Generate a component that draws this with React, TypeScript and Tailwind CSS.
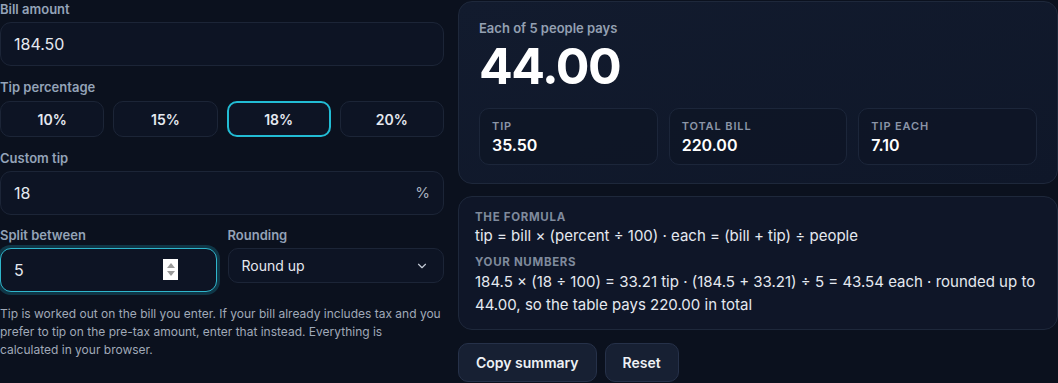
import React, { useState } from 'react';
import { ChevronDown } from 'lucide-react';

const PRESETS = [10, 15, 18, 20];

function Label({ children }: { children: React.ReactNode }) {
  return <p className="text-[13px] font-semibold text-[#94a3b8] leading-[18px] mb-[4px]">{children}</p>;
}

function Stat({ label, value }: { label: string; value: string }) {
  return (
    <div className="rounded-[10px] border border-[#1c263a] bg-[#0e1526]/80 px-[12px] pt-[10px] pb-[9px]">
      <p className="text-[11px] font-semibold tracking-[0.08em] text-[#8b95a7] leading-[14px]">{label}</p>
      <p className="text-[16px] font-semibold text-white leading-[20px] mt-[2px]">{value}</p>
    </div>
  );
}

export default function App() {
  const [pct, setPct] = useState(18);

  return (
    <div
      className="w-[1058px] h-[383px] overflow-hidden bg-[#0b111e] text-[#e2e8f0]"
      style={{ fontFamily: 'Inter, "Noto Sans", sans-serif' }}
    >
      <div className="grid grid-cols-[444px_1fr] gap-[14px]">
        {/* Inputs */}
        <div className="flex flex-col">
          <Label>Bill amount</Label>
          <div className="h-[44px] rounded-[11px] border border-[#1c2537] bg-[#0d1424] flex items-center px-[13px] text-[16px] text-[#e5e9f0]">
            184.50
          </div>

          <div className="mt-[12px]">
            <Label>Tip percentage</Label>
          </div>
          <div className="grid grid-cols-4 gap-[9px] mt-[1px]">
            {PRESETS.map(p => (
              <button
                key={p}
                onClick={() => setPct(p)}
                className={`h-[36px] rounded-[10px] bg-[#0d1424] text-[14px] font-semibold text-[#e5e9f0] ${
                  pct === p ? 'border-2 border-[#22bcd4]' : 'border border-[#1c2537]'
                }`}
              >
                {p}%
              </button>
            ))}
          </div>

          <div className="mt-[12px]">
            <Label>Custom tip</Label>
          </div>
          <div className="h-[44px] rounded-[11px] border border-[#1c2537] bg-[#0d1424] flex items-center justify-between px-[13px] text-[16px] text-[#e5e9f0]">
            <span>{pct}</span>
            <span className="text-[15px] text-[#a7b0bf]">%</span>
          </div>

          <div className="grid grid-cols-2 gap-[11px] mt-[11px]">
            <div>
              <Label>Split between</Label>
              <div className="relative h-[44px] rounded-[11px] border-[1.5px] border-[#2fb6cc] bg-[#0d1424] shadow-[0_0_0_3px_rgba(34,188,212,0.22)] flex items-center px-[13px] text-[16px] text-[#e5e9f0]">
                5
                <div className="absolute left-[162px] top-[10px] w-[15px] h-[21px] bg-white flex flex-col items-center justify-center gap-[3px]">
                  <span className="w-0 h-0 border-l-[4px] border-r-[4px] border-b-[5px] border-l-transparent border-r-transparent border-b-[#9a9a9a]" />
                  <span className="w-0 h-0 border-l-[4px] border-r-[4px] border-t-[5px] border-l-transparent border-r-transparent border-t-[#9a9a9a]" />
                </div>
              </div>
            </div>
            <div>
              <Label>Rounding</Label>
              <div className="relative h-[35px] rounded-[10px] border border-[#1c2537] bg-[#0d1424] flex items-center px-[13px] text-[14px] text-[#e5e9f0]">
                Round up
                <ChevronDown className="absolute right-[14px] top-[10px] w-[14px] h-[14px] text-[#c3cad5]" strokeWidth={2} />
              </div>
            </div>
          </div>

          <p className="mt-[13px] pr-[2px] text-[12px] leading-[18px] text-[#a0a9b8]">
            Tip is worked out on the bill you enter. If your bill already includes tax and you prefer to tip on the
            pre-tax amount, enter that instead. Everything is calculated in your browser.
          </p>
        </div>

        {/* Results */}
        <div className="flex flex-col pt-[1px]">
          <div className="rounded-[14px] border border-[#1e283b] bg-gradient-to-br from-[#121b2e] to-[#0f1729] px-[20px] pt-[17px] pb-[18px]">
            <p className="text-[13px] font-semibold text-[#94a0b2] leading-[18px]">Each of 5 people pays</p>
            <p className="text-[50px] font-bold text-white leading-[52px] tracking-[-0.03em] mt-[3px]">44.00</p>
            <div className="grid grid-cols-3 gap-[11px] mt-[16px]">
              <Stat label="TIP" value="35.50" />
              <Stat label="TOTAL BILL" value="220.00" />
              <Stat label="TIP EACH" value="7.10" />
            </div>
          </div>

          <div className="mt-[12px] rounded-[14px] border border-[#1e283b] bg-[#0f1628] px-[16px] pt-[12px] pb-[13px]">
            <p className="text-[11.5px] font-bold tracking-[0.06em] text-[#7f8a9c] leading-[16px]">THE FORMULA</p>
            <p className="text-[15px] leading-[22px] text-[#e5e9f0]">
              tip = bill × (percent ÷ 100) · each = (bill + tip) ÷ people
            </p>
            <p className="mt-[7px] text-[11.5px] font-bold tracking-[0.06em] text-[#7f8a9c] leading-[16px]">YOUR NUMBERS</p>
            <p className="text-[15px] leading-[23px] text-[#e5e9f0]">
              184.5 × (18 ÷ 100) = 33.21 tip · (184.5 + 33.21) ÷ 5 = 43.54 each · rounded up to 44.00, so the table pays
              220.00 in total
            </p>
          </div>

          <div className="flex gap-[8px] mt-[13px]">
            <button className="h-[39px] px-[17px] rounded-[10px] border border-[#263149] bg-[#172033] text-[14px] font-semibold text-[#eef1f5]">
              Copy summary
            </button>
            <button className="h-[39px] px-[17px] rounded-[10px] border border-[#263149] bg-[#172033] text-[14px] font-semibold text-[#eef1f5]">
              Reset
            </button>
          </div>
        </div>
      </div>
    </div>
  );
}
